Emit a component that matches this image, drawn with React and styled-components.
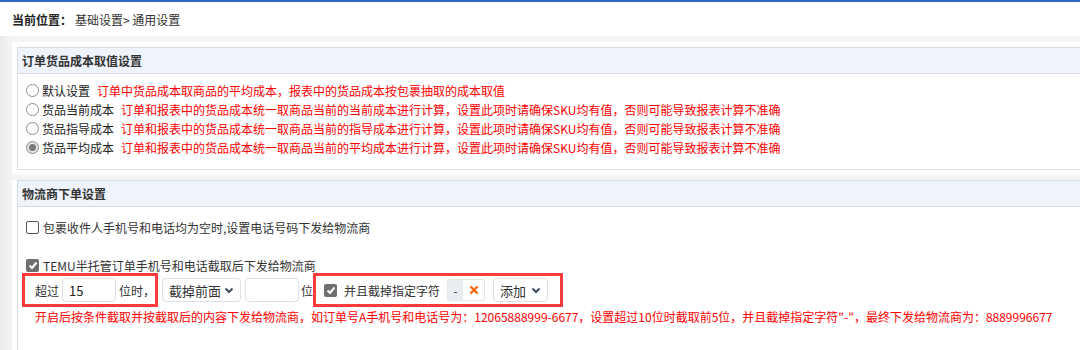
import styled, { createGlobalStyle } from "styled-components";

const GlobalStyle = createGlobalStyle`
  html, body {
    margin: 0;
    padding: 0;
    overflow: hidden;
    background: #ffffff;
    font-family: "Noto Sans CJK SC", "Noto Sans", "Liberation Sans", sans-serif;
    font-size: 12px;
    color: #333333;
  }
`;

const Page = styled.div`
  width: 1120px;
  min-height: 350px;
`;
const TopBar = styled.div`
  height: 2px;
  background-color: #3366c8;
`;
const Breadcrumb = styled.div`
  height: 34px;
  display: flex;
  align-items: center;
  padding-left: 12px;
  font-size: 12px;
  color: #333;
`;
const CrumbLabel = styled.span`
  font-weight: bold;
  color: #222;
  margin-right: 3px;
`;
const Main = styled.div`
  background: linear-gradient(to right, #ebebeb 0px, #f4f4f4 12px);
  background-color: #f0f0f0;
  padding: 6px 0 0 12px;
  display: flex;
  flex-direction: column;
  gap: 5px;
`;
const Section = styled.div`
  background-color: #ffffff;
  padding: ${props => props.first ? "5px" : "0px"} 0 5px 5px;
`;
const Panel = styled.div`
  border: 1px solid #d8dce3;
  border-right: none;
`;
const PanelHeader = styled.div`
  height: 25px;
  display: flex;
  align-items: center;
  padding-left: 4px;
  background-color: #eff3fc;
  border-bottom: 1px solid #d8dce3;
  font-weight: bold;
  color: #333;
`;
const PanelBody = styled.div`
  padding: ${props => props.pad || "7px 0 12px 4px"};
`;

const RadioRow = styled.div`
  height: 19px;
  display: flex;
  align-items: center;
  padding-left: 4px;
`;
const RadioDot = styled.span`
  width: 11px;
  height: 11px;
  border-radius: 50%;
  border: 1px solid #8c8c8c;
  background-color: ${props => props.checked ? "#e4e4e4" : "#fff"};
  display: inline-flex;
  align-items: center;
  justify-content: center;
  margin-right: 3px;
  flex-shrink: 0;

  &::after {
    content: "";
    display: ${props => props.checked ? "block" : "none"};
    width: 7px;
    height: 7px;
    border-radius: 50%;
    background-color: #7a7a7a;
  }
`;
const OptionLabel = styled.span`
  color: #222;
  margin-right: 7px;
`;
const RedNote = styled.span`
  color: #ff0000;
`;

const CheckRow = styled.div`
  height: ${props => props.h || 20}px;
  margin-top: ${props => props.mt || 0}px;
  display: flex;
  align-items: center;
  padding-left: 4px;
  color: #333;
`;
const CheckBox = styled.span`
  width: ${props => props.checked ? 13 : 11}px;
  height: ${props => props.checked ? 13 : 11}px;
  border-radius: 2px;
  border: ${props => props.checked ? "none" : "1px solid #555"};
  background-color: ${props => props.checked ? "#6f6f6f" : "#fff"};
  display: inline-flex;
  align-items: center;
  justify-content: center;
  margin-right: 4px;
  flex-shrink: 0;
`;

const ControlRow = styled.div`
  display: flex;
  align-items: center;
  height: 34px;
`;
const HighlightBox = styled.div`
  display: flex;
  align-items: center;
  height: 28px;
  border: 3px solid #ff3b3b;
  padding: ${props => props.pad};
  gap: ${props => props.gap || 3}px;
  margin-right: ${props => props.mr || 0}px;
`;
const TextInput = styled.div`
  box-sizing: border-box;
  width: ${props => props.w}px;
  height: 24px;
  border: 1px solid #dcdfe6;
  border-radius: 4px;
  padding-left: 6px;
  display: flex;
  align-items: center;
  font-size: 13px;
  color: #222;
  margin-right: ${props => props.mr || 0}px;
`;
const Select = styled.div`
  box-sizing: border-box;
  width: ${props => props.w}px;
  height: 24px;
  border: 1px solid #dcdfe6;
  border-radius: 4px;
  padding: 0 6px;
  display: flex;
  align-items: center;
  justify-content: space-between;
  font-size: 13px;
  color: #333;
  margin-right: ${props => props.mr || 0}px;
`;
const Unit = styled.span`
  color: #333;
  margin-right: ${props => props.mr || 0}px;
`;
const CharGroup = styled.div`
  display: flex;
  height: 20px;
  margin: 0 5px 0 4px;
  border: 1px solid #e3e6eb;
  border-radius: 2px;
`;
const CharValue = styled.span`
  width: 15px;
  display: flex;
  align-items: center;
  justify-content: center;
  background-color: #e9edf2;
  color: #333;
`;
const RemoveBtn = styled.span`
  width: 21px;
  display: flex;
  align-items: center;
  justify-content: center;
  background-color: #fff;
`;
const Hint = styled.div`
  color: #ff0000;
  line-height: 16px;
  margin-top: 2px;
  padding-left: 13px;
`;

const Chevron = () => (
  <svg width="10" height="7" viewBox="0 0 10 7">
    <polyline points="1.5,1.5 5,5 8.5,1.5" fill="none" stroke="#3f4b5e" strokeWidth="2" />
  </svg>
);
const Tick = () => (
  <svg width="10" height="9" viewBox="0 0 10 9">
    <polyline points="1.5,4.5 4,7 8.5,1.5" fill="none" stroke="#fff" strokeWidth="2" />
  </svg>
);
const Cross = () => (
  <svg width="10" height="10" viewBox="0 0 10 10">
    <path d="M1.5 1.5 L8.5 8.5 M8.5 1.5 L1.5 8.5" stroke="#ff6a00" strokeWidth="2.4" />
  </svg>
);

const costOptions = [
  { label: "默认设置", note: "订单中货品成本取商品的平均成本，报表中的货品成本按包裹抽取的成本取值" },
  { label: "货品当前成本", note: "订单和报表中的货品成本统一取商品当前的当前成本进行计算，设置此项时请确保SKU均有值，否则可能导致报表计算不准确" },
  { label: "货品指导成本", note: "订单和报表中的货品成本统一取商品当前的指导成本进行计算，设置此项时请确保SKU均有值，否则可能导致报表计算不准确" },
  { label: "货品平均成本", note: "订单和报表中的货品成本统一取商品当前的平均成本进行计算，设置此项时请确保SKU均有值，否则可能导致报表计算不准确", checked: true },
];

export default function App() {
  return (
    <Page>
      <GlobalStyle />
      <TopBar />
      <Breadcrumb>
        <CrumbLabel>当前位置：</CrumbLabel>
        基础设置&gt; 通用设置
      </Breadcrumb>
      <Main>
        <Section first>
          <Panel>
            <PanelHeader>订单货品成本取值设置</PanelHeader>
            <PanelBody>
              {costOptions.map(o => (
                <RadioRow key={o.label}>
                  <RadioDot checked={o.checked} />
                  <OptionLabel>{o.label}</OptionLabel>
                  <RedNote>{o.note}</RedNote>
                </RadioRow>
              ))}
            </PanelBody>
          </Panel>
        </Section>
        <Section>
          <Panel>
            <PanelHeader>物流商下单设置</PanelHeader>
            <PanelBody pad="10px 0 30px 4px">
              <CheckRow>
                <CheckBox />
                包裹收件人手机号和电话均为空时,设置电话号码下发给物流商
              </CheckRow>
              <CheckRow h={16} mt={20}>
                <CheckBox checked><Tick /></CheckBox>
                TEMU半托管订单手机号和电话截取后下发给物流商
              </CheckRow>
              <ControlRow>
                <HighlightBox pad="0 0 0 10px" mr={4}>
                  <Unit>超过</Unit>
                  <TextInput w={54}>15</TextInput>
                  <Unit>位时，</Unit>
                </HighlightBox>
                <Select w={79} mr={4}>截掉前面<Chevron /></Select>
                <TextInput w={54} mr={2} />
                <Unit>位</Unit>
                <HighlightBox pad="0 12px 0 8px" gap={0}>
                  <CheckBox checked><Tick /></CheckBox>
                  <Unit>并且截掉指定字符</Unit>
                  <CharGroup>
                    <CharValue>-</CharValue>
                    <RemoveBtn><Cross /></RemoveBtn>
                  </CharGroup>
                  <Select w={55}>添加<Chevron /></Select>
                </HighlightBox>
              </ControlRow>
              <Hint>开启后按条件截取并按截取后的内容下发给物流商，如订单号A手机号和电话号为：12065888999-6677，设置超过10位时截取前5位，并且截掉指定字符"-"，最终下发给物流商为：8889996677</Hint>
            </PanelBody>
          </Panel>
        </Section>
      </Main>
    </Page>
  );
}
